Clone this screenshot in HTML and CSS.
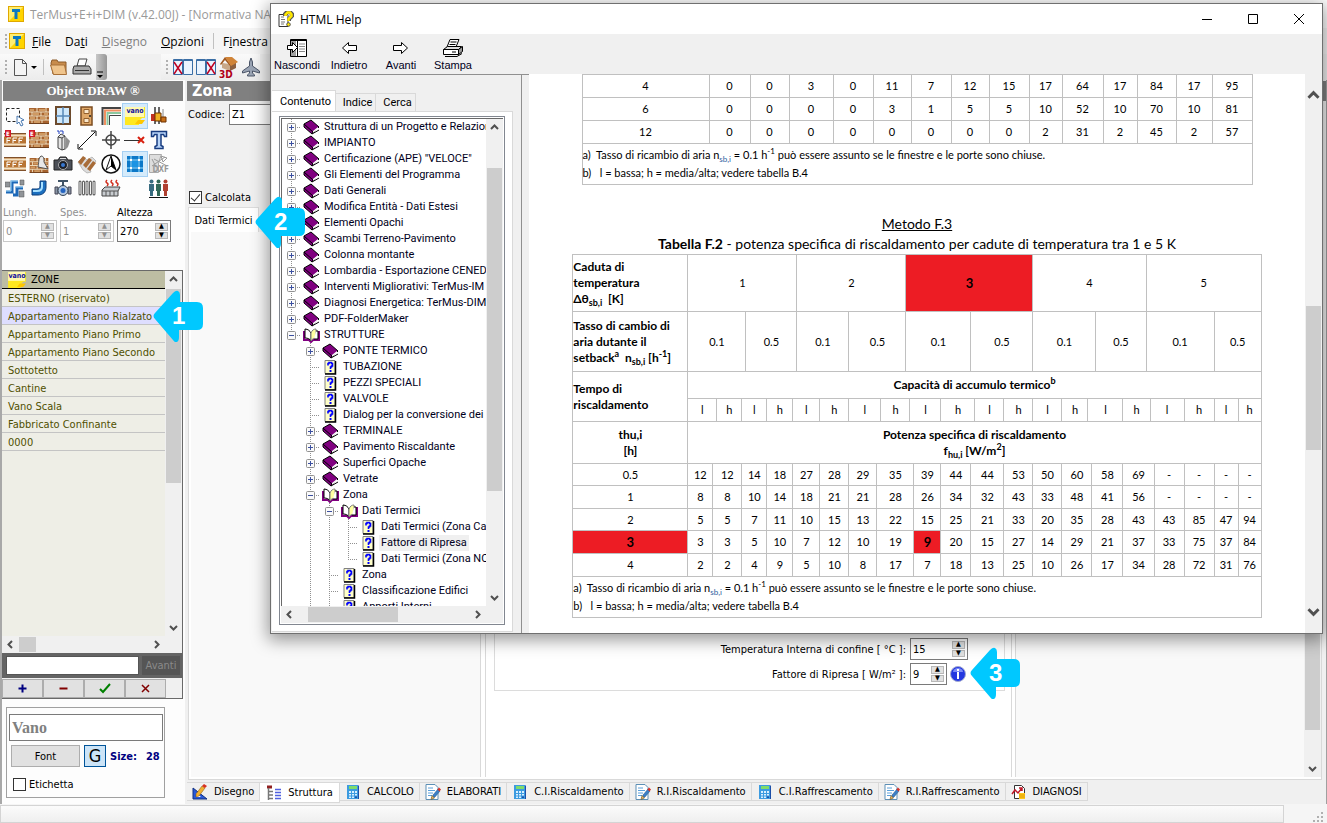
FILE: index.html
```html
<!DOCTYPE html>
<html lang="it">

<head>
  <meta charset="UTF-8">
  <title>TerMus+E+i+DIM</title>
  <link rel="stylesheet" href="styles.css">
</head>

<body>
  <!-- shared icons -->
  <svg class="defs" width="0" height="0">
    <symbol id="logo" viewBox="0 0 16 16">
      <rect x="0.5" y="0.5" width="15" height="15" fill="#ffd400" stroke="#e0a800"/>
      <path d="M1 1h14L1 15z" fill="#ffee70"/>
      <path d="M4 3h8v3h-2.500v7h-3V6H4z" fill="#0a78c2"/>
    </symbol>
    <symbol id="book" viewBox="0 0 17 16">
      <path d="M1 5L8 1l8 7-6 6z" fill="#800080" stroke="#000" stroke-width="1"/>
      <path d="M1 5v3l8 7 1-2z" fill="#800080" stroke="#000" stroke-width="1"/>
      <path d="M10 12l5-4v2l-5 4z" fill="#fff"/>
      <path d="M9 15l7-4" stroke="#000"/>
    </symbol>
    <symbol id="open" viewBox="0 0 17 16">
      <path d="M1 4v9h5l2 2 2-2h6V4" fill="none" stroke="#800080" stroke-width="2"/>
      <path d="M2 2c3 0 5 2 6 4v8c-1-2-3-3-6-3z" fill="#fff" stroke="#000"/>
      <path d="M8 6c1-3 3-4 5-4v9c-2 0-4 1-5 3z" fill="#ffffa0" stroke="#808080"/>
      <path d="M13 4h2v8h-4" fill="#fff" stroke="#000"/>
    </symbol>
    <symbol id="topic" viewBox="0 0 17 16">
      <path d="M3 1.500h10v13H3z" fill="#ffffc8" stroke="#808080"/>
      <path d="M13.500 2v13H3" fill="none" stroke="#000" stroke-width="1.500"/>
      <path d="M6 6.500V4.500h1v-1h2.500v1h1V7h-1v1H8.500v2" fill="none" stroke="#00f" stroke-width="1.600"/>
      <path d="M7.500 11h2v2h-2z" fill="#00f"/>
    </symbol>
    <symbol id="plus" viewBox="0 0 9 9">
      <rect x="0.5" y="0.5" width="8" height="8" rx="1" fill="#fafafa" stroke="#919191"/>
      <path d="M2 4.500h5M4.500 2v5" stroke="#3c50a0"/>
    </symbol>
    <symbol id="minus" viewBox="0 0 9 9">
      <rect x="0.5" y="0.5" width="8" height="8" rx="1" fill="#fafafa" stroke="#919191"/>
      <path d="M2 4.500h5" stroke="#3c50a0"/>
    </symbol>
    <symbol id="calc" viewBox="0 0 16 16">
      <path d="M2 1h11v14H2z" fill="#3c9be0"/>
      <path d="M13 1l1 1v13h-1z" fill="#1c4fa8"/>
      <path d="M4 2h8v3H4z" fill="#7fdc6a"/>
      <path d="M4 7h2v2H4zM7 7h2v2H7zM10 7h2v2h-2zM4 10h2v1.500H4zM7 10h2v1.500H7zM10 10h2v1.500h-2zM4 12.500h2V14H4zM7 12.500h2V14H7z" fill="#d8efff"/>
      <path d="M10 12.500h2V14h-2z" fill="#1c4fa8"/>
    </symbol>
    <symbol id="edit" viewBox="0 0 16 16">
      <path d="M1 0.500h9l3 3v12H1z" fill="#fff" stroke="#5c8fb5"/>
      <path d="M3 4h5M3 6.500h7M3 9h5M3 11.500h4" stroke="#5aa0dc"/>
      <path d="M7 14l1-3 5-6 2 2-5 6z" fill="#3a7fc8" stroke="#24507c" stroke-width="0.500"/>
      <path d="M12.500 5.500l1.500-2 2 2-1.500 2z" fill="#d83028"/>
      <path d="M6 15.500l1-4 2.500 2.500z" fill="#e8b860" stroke="#5c4010" stroke-width="0.500"/>
    </symbol>
    <symbol id="up" viewBox="0 0 9 9"><path d="M1 6l3.500-3.500L8 6" fill="none" stroke="#505050" stroke-width="2"/></symbol>
    <symbol id="down" viewBox="0 0 9 9"><path d="M1 3l3.500 3.500L8 3" fill="none" stroke="#505050" stroke-width="2"/></symbol>
    <symbol id="left" viewBox="0 0 9 9"><path d="M6 1L2.500 4.500 6 8" fill="none" stroke="#505050" stroke-width="2"/></symbol>
    <symbol id="right" viewBox="0 0 9 9"><path d="M3 1l3.500 3.500L3 8" fill="none" stroke="#505050" stroke-width="2"/></symbol>
    <symbol id="arrow" viewBox="0 0 50 52">
      <path d="M2 23L20 3q3-3 5-2 2 1 2 4v7h17q6 0 6 6v16q0 6-6 6H26v7q0 4-2 5-2 1-4-2L2 29q-3-3 0-6z" fill="#00c8ff"/>
    </symbol>
    <symbol id="vano" viewBox="0 0 20 18">
      <path d="M0 0h20v11h-3l-3 3v4H0z" fill="#ffe820"/>
      <path d="M0 0h19v10H0z" fill="#fff9b0"/>
      <path d="M10 17l3-4h7l-3 4z" fill="#ffc800"/>
    </symbol>
    <symbol id="bricks" viewBox="0 0 20 16">
      <path d="M0 0h20v16H0z" fill="#a86430"/>
      <path d="M1 1h4v2H1zM10 1h6v2h-6zM4 5h6v2H4zM15 5h4v2h-4zM1 9h5v2H1zM11 9h5v2h-5zM5 13h6v2H5z" fill="#cf9a62"/>
      <path d="M0 4h20M0 8h20M0 12h20M8 0v4M17 0v4M3 4v4M12 4v4M8 8v4M17 8v4M3 12v4M13 12v4" stroke="#f0e0c0"/>
      <path d="M0 15.500h20" stroke="#70401c"/>
    </symbol>
    <symbol id="blocks" viewBox="0 0 22 14">
      <path d="M0 0h22v14H0z" fill="#b87434"/>
      <path d="M0 2.500h22M0 11.500h22" stroke="#f3e2c4" stroke-width="2"/>
      <path d="M3 10V5h4M3 7.500h3M9 10V5h4M9 7.500h3M15 10V5h4M15 7.500h3" fill="none" stroke="#fff" stroke-width="1"/>
      <path d="M0 0.500h22M0 13.500h22" stroke="#80502a"/>
    </symbol>
  </svg>

  <header class="titlebar">
    <svg width="16" height="16"><use href="#logo"/></svg>
    <span>TerMus+E+i+DIM (v.42.00J) - [Normativa NAZ</span>
  </header>

  <nav class="menubar">
    <i class="grip"></i>
    <svg width="16" height="16"><use href="#logo"/></svg>
    <a href="#file"><u>F</u>ile</a>
    <a href="#dati">Da<u>t</u>i</a>
    <a href="#disegno" class="off"><u>D</u>isegno</a>
    <a href="#opzioni"><u>O</u>pzioni</a>
    <i class="sep"></i>
    <a href="#finestra">F<u>i</u>nestra</a>
  </nav>

  <div class="toolbar">
    <div class="tools">
      <i class="grip"></i>
      <button class="tool" aria-label="Nuovo">
        <svg width="26" height="20" viewBox="0 0 26 20">
          <path d="M2.500 2.500h8l4 4v12h-12z" fill="#f4f4f4" stroke="#555"/><path d="M10.500 2.500v4h4" fill="none" stroke="#555"/>
          <path d="M19 9h6l-3 3z" fill="#000"/>
        </svg>
      </button>
      <i class="sep"></i>
      <button class="tool" aria-label="Apri">
        <svg width="20" height="20" viewBox="0 0 20 20">
          <path d="M2 6l1-3h5l1 2h8v12H4z" fill="#c88c4c" stroke="#8c5a28"/><path d="M1.500 8h14l2 9.500h-13z" fill="#efc48c" stroke="#a87038"/>
        </svg>
      </button>
      <button class="tool" aria-label="Stampa">
        <svg width="20" height="20" viewBox="0 0 20 20">
          <path d="M5 9l2-7h8l-2 7z" fill="#fff" stroke="#444"/><path d="M2 9h15l2 3v5H1v-5z" fill="#a8a8a8" stroke="#333"/><path d="M3 13.500h14" stroke="#333"/>
        </svg>
      </button>
      <button class="more" aria-label="Altro">
        <svg width="8" height="10" viewBox="0 0 8 10"><path d="M1 2h6" stroke="#000"/><path d="M1 5h6L4 8z"/></svg>
      </button>
    </div>
    <div class="tools second">
      <i class="grip"></i>
      <button class="tool" aria-label="Chiudi sinistra">
        <svg width="20" height="18" viewBox="0 0 20 18">
          <path d="M0.500 1.500h9v15h-9zM10.500 1.500h9v15h-9z" fill="#eaf4ff" stroke="#3a6ea5"/><path d="M1 2h8M11 2h8" stroke="#3a6ea5" stroke-width="2"/><path d="M1 4l8 12M9 4L1 16" stroke="#c00020" stroke-width="1.500"/>
        </svg>
      </button>
      <button class="tool" aria-label="Chiudi destra">
        <svg width="20" height="18" viewBox="0 0 20 18">
          <path d="M0.500 1.500h9v15h-9zM10.500 1.500h9v15h-9z" fill="#eaf4ff" stroke="#3a6ea5"/><path d="M1 2h8M11 2h8" stroke="#3a6ea5" stroke-width="2"/><path d="M11 4l8 12M19 4l-8 12" stroke="#c00020" stroke-width="1.500"/>
        </svg>
      </button>
      <button class="tool home" aria-label="Vista 3D">
        <svg width="20" height="22" viewBox="0 0 20 22">
          <path d="M3 7v5l8 3V8z" fill="#c8a888"/><path d="M11 9v6l6-3V6z" fill="#8c6040"/><path d="M1 8l5-7 6 8-1 1-5-6-4 5z" fill="#a05820"/><path d="M6 1h7l6 5-7 4z" fill="#d08438"/>
        </svg>
        <b>3D</b>
      </button>
      <button class="tool" aria-label="Volo">
        <svg width="18" height="20" viewBox="0 0 18 20">
          <path d="M9 1l1.500 4v4l7 5v2l-7-2v2l2 2v1H5.500v-1l2-2v-2l-7 2v-2l7-5V5z" fill="#9aa4b4" stroke="#4c5668"/>
        </svg>
      </button>
    </div>
  </div>

  <main class="work">
    <aside class="side">
      <h2 class="draw-title">Object DRAW ®</h2>
      <div class="palette">
        <button aria-label="Selezione"><svg width="22" height="22" viewBox="0 0 22 22"><path d="M2.500 3.500h13v13h-13z" fill="none" stroke="#222" stroke-dasharray="3 2"/><path d="M13 11l7 4-3 1 2 4-2 1-2-4-2 2z" fill="#fff" stroke="#4878b0"/></svg></button>
        <button aria-label="Parete"><svg width="20" height="16"><use href="#bricks"/></svg></button>
        <button aria-label="Finestra"><svg width="16" height="20" viewBox="0 0 16 20"><path d="M1 1h14v17H1z" fill="#cfe8fb" stroke="#6c4a2c" stroke-width="2"/><path d="M8 1v17M1 10h14" stroke="#5888b8" stroke-width="1.500"/></svg></button>
        <button aria-label="Porta"><svg width="14" height="20" viewBox="0 0 14 20"><path d="M1 1h11v18H1z" fill="#e0a868" stroke="#7c4c20" stroke-width="1.500"/><path d="M4 3.500h5v4H4zM4 12.500h5v4H4z" fill="#fbe8cc" stroke="#94602c"/><path d="M9 10h2" stroke="#222" stroke-width="1.500"/></svg></button>
        <button aria-label="Cornice"><svg width="20" height="20" viewBox="0 0 20 20"><path d="M1.500 19V2H20" fill="none" stroke="#444" stroke-width="2"/><path d="M4 19V4.500H20" fill="none" stroke="#f09060" stroke-width="2"/><path d="M6.500 19V7H20" fill="none" stroke="#8cc8a0" stroke-width="2"/><path d="M8.500 19V9.500H20" fill="none" stroke="#444"/></svg></button>
        <button class="on" aria-label="Vano"><span class="vano"><svg width="20" height="18"><use href="#vano"/></svg><b>vano</b></span></button>
        <button aria-label="Pilastri"><svg width="18" height="20" viewBox="0 0 18 20"><path d="M5 1v17M9 1v17" stroke="#666" stroke-width="2"/><path d="M13 3v12" stroke="#888"/><path d="M1 8h5v7H1z" fill="#c03020"/><path d="M5 7h6v8H5z" fill="#f0b020" stroke="#6c3000"/><path d="M11 11h5v5h-5z" fill="#c87018" stroke="#6c3000"/></svg></button>

        <button class="ext" aria-label="Blocchi esterni"><svg width="22" height="14"><use href="#blocks"/></svg><b>E</b></button>
        <button class="ext" aria-label="Parete esterna"><svg width="20" height="16"><use href="#bricks"/></svg><b>E</b></button>
        <button aria-label="Solido"><svg width="16" height="22" viewBox="0 0 16 22"><path d="M3 8l3-3 4 2v13l-3 1-4-2z" fill="#e4e4e4" stroke="#444"/><path d="M7 9v12M3 8l4 1 3-2" fill="none" stroke="#444"/><path d="M11 8l4 4-2 6-3 3z" fill="#909090"/><path d="M2 2h2v3M5 2h3v3" fill="none" stroke="#2040c0"/></svg></button>
        <button aria-label="Misura"><svg width="20" height="20" viewBox="0 0 20 20"><path d="M2 18L18 2M1 14v5h5M14 1h5v5" fill="none" stroke="#111"/></svg></button>
        <button aria-label="Mirino"><svg width="18" height="18" viewBox="0 0 18 18"><circle cx="9" cy="9" r="5" fill="none" stroke="#444" stroke-width="1.500"/><path d="M0 9h18M9 0v18" stroke="#444" stroke-width="1.500"/></svg></button>
        <button aria-label="Elimina linea"><svg width="22" height="14" viewBox="0 0 22 14"><path d="M0 7.500h16" stroke="#333"/><path d="M14 4l6 6M20 4l-6 6" stroke="#d82010" stroke-width="2"/></svg></button>
        <button aria-label="Testo"><svg width="18" height="20" viewBox="0 0 18 20"><path d="M1.500 1.500h15v5h-2l-1-2h-2.500v11l2 1v2h-8v-2l2-1v-11H4.500l-1 2h-2z" fill="#b8d4f8" stroke="#183c80" stroke-width="1.500"/></svg></button>

        <button aria-label="Blocchi"><svg width="22" height="14"><use href="#blocks"/></svg></button>
        <button aria-label="Muratura"><svg width="20" height="18" viewBox="0 0 20 18"><use href="#bricks" y="3" width="20" height="15"/><path d="M9 12c1-3 0-9 3-11 3 0 3 3 3 6l4 7-5-1z" fill="#e8e8e8" stroke="#555"/></svg></button>
        <button aria-label="Foto"><svg width="20" height="16" viewBox="0 0 20 16"><path d="M1 4h4l2-3h6l2 3h4v10H1z" fill="#4c5058" stroke="#222"/><circle cx="10" cy="9" r="4.500" fill="#1c2028" stroke="#aaa"/><circle cx="10" cy="9" r="2" fill="#3878d0"/><path d="M7 2.500h6" stroke="#ddd"/></svg></button>
        <button aria-label="Scala"><svg width="20" height="20" viewBox="0 0 20 20"><path d="M1 8l5-5 4 3 5-3 4 4-6 8 1 3-4 1-4-3z" fill="#ddd" stroke="#888" stroke-width="0.500"/><path d="M1 8l5-6 3 2-5 7zM6 11l6-7 3 2-6 8zM10 15l6-8 3 2-6 8z" fill="#a86c38"/></svg></button>
        <button aria-label="Nord"><svg width="20" height="20" viewBox="0 0 20 20"><circle cx="10" cy="10" r="9" fill="#fff" stroke="#111" stroke-width="1.500"/><path d="M10 2l5 14-5-4-5 4z" fill="#fff" stroke="#111"/><path d="M10 2v10l5 4z"/></svg></button>
        <button class="on" aria-label="Griglia"><svg width="16" height="16" viewBox="0 0 16 16"><path d="M0 0h16v16H0z" fill="#0c78c8"/><path d="M4 0v16M12 0v16M0 4h16M0 12h16" stroke="#9ce0ff"/><path d="M5 5h6v6H5z" fill="#1c94e4"/><path d="M3 3h2v2H3zM11 3h2v2h-2zM3 11h2v2H3zM11 11h2v2h-2z" fill="#fff"/></svg></button>
        <button class="dxf" aria-label="Sfondo DXF"><svg width="20" height="20" viewBox="0 0 20 20"><path d="M0.500 0.500h12l-3 8v10h-9z" fill="#ddd" stroke="#aaa"/><path d="M3 12L16 3M5 5l13 7M3 5l4 8M12 2l6 2-4 4z" fill="none" stroke="#999"/></svg><b>DXF</b></button>

        <button aria-label="Tubazioni"><svg width="20" height="20" viewBox="0 0 20 20"><path d="M0 4h5v5H0zM15 2h4v5h-4zM14 13h5v6h-5z" fill="#909498" stroke="#555" stroke-width="0.500"/><path d="M1 14h6V4h6M18 10h-6v7H8" fill="none" stroke="#1c68b8" stroke-width="3"/><path d="M1 13h5V3h7M18 9h-7" fill="none" stroke="#a0d8f8"/></svg></button>
        <button aria-label="Raccordo"><svg width="16" height="16" viewBox="0 0 16 16"><path d="M9 1h6v6c0 5-3 8-8 8H1V9h5c2 0 3-1 3-3z" fill="#1c70c0" stroke="#0c3c78"/><path d="M11 2v5c0 3-2 4-5 4H2" fill="none" stroke="#a8e0ff" stroke-width="2"/></svg></button>
        <button aria-label="Valvola"><svg width="18" height="18" viewBox="0 0 18 18"><path d="M4 2h10M9 2v5" stroke="#405468" stroke-width="2"/><path d="M1 8h3v7H1zM14 8h3v7h-3z" fill="#8894a4" stroke="#445"/><circle cx="9" cy="11.500" r="5" fill="#b4c8e0" stroke="#345"/><circle cx="9" cy="11.500" r="2.500" fill="#2464c0"/></svg></button>
        <button aria-label="Radiatore"><svg width="18" height="16" viewBox="0 0 18 16"><path d="M2 2v12M5.500 2v12M9 2v12M12.500 2v12M16 2v12" stroke="#666" stroke-width="3" stroke-linecap="round"/><path d="M2 2v12M5.500 2v12M9 2v12M12.500 2v12M16 2v12" stroke="#f4f4f4"/></svg></button>
        <button aria-label="Riscaldamento"><svg width="20" height="18" viewBox="0 0 20 18"><path d="M6 1q-2 2 0 3t0 3M11 1q-2 2 0 3t0 3M16 1q-2 2 0 3t0 3" fill="none" stroke="#d03020" stroke-width="1.500"/><path d="M1 11l3-3h15l-2 4v5H1z" fill="#c8ccd0" stroke="#444"/><path d="M1 12h16M5 12v5M9 12v5M13 12v5" stroke="#555"/></svg></button>
        <span></span>
        <button aria-label="Occupanti"><svg width="22" height="20" viewBox="0 0 22 20"><path d="M1 6h5v7H5v5H2v-5H1z" fill="#386c80"/><circle cx="3.500" cy="3.500" r="2" fill="#386c80"/><path d="M8 6h5v7h-1v5H9v-5H8z" fill="#306858"/><circle cx="10.500" cy="3.500" r="2" fill="#306858"/><path d="M15 6h5v7h-1v5h-3v-5h-1z" fill="#b04030"/><circle cx="17.500" cy="3.500" r="2" fill="#b04030"/><path d="M1 19.500h19" stroke="#111"/></svg></button>
      </div>

      <div class="dims">
        <div class="dim off">
          <label for="lungh">Lungh.</label>
          <div class="spin"><input id="lungh" type="text" value="0" disabled><span><button disabled aria-label="Su">▲</button><button disabled aria-label="Giù">▼</button></span></div>
        </div>
        <div class="dim off">
          <label for="spes">Spes.</label>
          <div class="spin"><input id="spes" type="text" value="1" disabled><span><button disabled aria-label="Su">▲</button><button disabled aria-label="Giù">▼</button></span></div>
        </div>
        <div class="dim">
          <label for="altezza">Altezza</label>
          <div class="spin"><input id="altezza" type="text" value="270"><span><button aria-label="Su">▲</button><button aria-label="Giù">▼</button></span></div>
        </div>
      </div>

      <div class="zones">
        <div class="zones-body">
          <div class="zones-list">
            <h3><span class="vano small"><svg width="18" height="16"><use href="#vano"/></svg><b>vano</b></span>ZONE</h3>
            <ul>
              <li>ESTERNO (riservato)</li>
              <li class="sel">Appartamento Piano Rialzato</li>
              <li>Appartamento Piano Primo</li>
              <li>Appartamento Piano Secondo</li>
              <li>Sottotetto</li>
              <li>Cantine</li>
              <li>Vano Scala</li>
              <li>Fabbricato Confinante</li>
              <li>0000</li>
            </ul>
          </div>
          <div class="vbar"><svg width="9" height="9"><use href="#up"/></svg><i class="thumb zones-thumb"></i><svg class="end" width="9" height="9"><use href="#down"/></svg></div>
        </div>
        <div class="hbar"><svg width="9" height="9"><use href="#left"/></svg><i class="thumb"></i><svg class="end" width="9" height="9"><use href="#right"/></svg></div>
        <div class="search"><input type="text" aria-label="Cerca zona"><button>Avanti</button></div>
        <div class="actions">
          <button aria-label="Aggiungi"><svg width="11" height="11" viewBox="0 0 11 11"><path d="M1.500 5.500h8M5.500 1.500v8" stroke="#000080" stroke-width="2"/></svg></button>
          <button aria-label="Rimuovi"><svg width="11" height="11" viewBox="0 0 11 11"><path d="M1.500 5.500h8" stroke="#800000" stroke-width="2"/></svg></button>
          <button aria-label="Conferma"><svg width="12" height="11" viewBox="0 0 12 11"><path d="M1 6l3 3 7-8" fill="none" stroke="#008000" stroke-width="2"/></svg></button>
          <button aria-label="Annulla"><svg width="11" height="11" viewBox="0 0 11 11"><path d="M2 2l7 7M9 2L2 9" stroke="#800000" stroke-width="1.500"/></svg></button>
        </div>
      </div>

      <div class="fontbox">
        <input class="sample" type="text" value="Vano" aria-label="Testo">
        <div class="fontrow">
          <button class="font">Font</button>
          <button class="bold">G</button>
          <b>Size:</b><b>28</b>
        </div>
        <label class="check"><input type="checkbox">Etichetta</label>
      </div>
    </aside>

    <section class="editor">
      <h1>Zona</h1>
      <div class="head">
        <div class="code"><label for="codice">Codice:</label><input id="codice" type="text" value="Z1"></div>
        <label class="check"><input type="checkbox" checked>Calcolata</label>
      </div>
      <div class="subtabs"><button>Dati Termici</button></div>
      <div class="panes">
        <div class="pane left"></div>
        <div class="pane mid">
          <div class="group">
            <div class="field"><label for="confine">Temperatura Interna di confine [ °C ]:</label><div class="spin wide"><input id="confine" type="text" value="15"><span><button aria-label="Su">▲</button><button aria-label="Giù">▼</button></span></div></div>
            <div class="field"><label for="ripresa">Fattore di Ripresa [ W/m² ]:</label><div class="spin"><input id="ripresa" type="text" value="9"><span><button aria-label="Su">▲</button><button aria-label="Giù">▼</button></span></div>
              <button class="info" aria-label="Informazioni"><svg width="16" height="16" viewBox="0 0 16 16"><circle cx="8" cy="8" r="7.500" fill="#2438e0" stroke="#a0a8d0"/><path d="M3 6a5 4 0 0 1 10 0z" fill="#7c8cf8"/><path d="M7 3h2v2H7zM7 6h2v7H7z" fill="#fff"/></svg></button>
            </div>
          </div>
        </div>
        <div class="pane rest"></div>
        <div class="vbar"><i class="thumb editor-thumb"></i><svg class="end" width="9" height="9"><use href="#down"/></svg></div>
      </div>
      <nav class="sheets">
        <a href="#s1"><svg width="16" height="16" viewBox="0 0 16 16"><path d="M1 15V4l14 11z" fill="#2858d8" stroke="#103080"/><path d="M4 13V9l5 4z" fill="#fff"/><path d="M4 10l6-8 3 2-6 8-3 1z" fill="#f0b030" stroke="#805010" stroke-width="0.500"/><path d="M10 2l2-2 3 2-2 2z" fill="#d83020"/></svg>Disegno</a>
        <a href="#s2" class="cur"><svg width="16" height="16" viewBox="0 0 16 16"><path d="M1 2h5" stroke="#902020" stroke-width="3"/><path d="M2.500 3v12M2 6.500h5M2 10h5M2 13.500h5" fill="none" stroke="#777" stroke-width="1.500"/><path d="M9 4.500h6M9 7.500h6M9 10.500h6M9 13.500h6" stroke="#5060e0" stroke-width="1.500"/></svg>Struttura</a>
        <a href="#s3"><svg width="16" height="16"><use href="#calc"/></svg>CALCOLO</a>
        <a href="#s4"><svg width="16" height="16"><use href="#edit"/></svg>ELABORATI</a>
        <a href="#s5"><svg width="16" height="16"><use href="#calc"/></svg>C.I.Riscaldamento</a>
        <a href="#s6"><svg width="16" height="16"><use href="#edit"/></svg>R.I.Riscaldamento</a>
        <a href="#s7"><svg width="16" height="16"><use href="#calc"/></svg>C.I.Raffrescamento</a>
        <a href="#s8"><svg width="16" height="16"><use href="#edit"/></svg>R.I.Raffrescamento</a>
        <a href="#s9"><svg width="16" height="16" viewBox="0 0 16 16"><path d="M3.500 1.500h7l3 3v10h-10z" fill="#fff" stroke="#333"/><path d="M1 10l3-4 3 3 4-5M8 4h3v3" fill="none" stroke="#c01828" stroke-width="1.500"/><path d="M8 9h6v6H8z" fill="#ffc820"/><path d="M8 11h6M8 13h6" stroke="#e0a000"/></svg>DIAGNOSI</a>
      </nav>
    </section>
  </main>

  <footer class="status"><div></div><svg width="12" height="12" viewBox="0 0 12 12"><path d="M9 1h2v2H9zM5 5h2v2H5zM9 5h2v2H9zM1 9h2v2H1zM5 9h2v2H5zM9 9h2v2H9z" fill="#b0b0b0"/></svg></footer>

  <div class="help" role="dialog" aria-label="HTML Help">
    <div class="help-title">
      <svg width="16" height="16" viewBox="0 0 16 16"><path d="M1 3.500h9v12H1z" fill="#fff" stroke="#333"/><path d="M3 6h3M3 8.500h4M3 11h4M3 13h3" stroke="#777"/><path d="M7 5V3l2-2h3l2 2v2l-3 3v2" fill="none" stroke="#555" stroke-width="4"/><path d="M7.500 5V3.500l2-2h2.500l1.500 2V5l-3 3v2" fill="none" stroke="#ffe800" stroke-width="2.500"/><circle cx="10.500" cy="13.500" r="1.800" fill="#ffe800" stroke="#555"/></svg>
      <span>HTML Help</span>
      <div class="winbtns">
        <button aria-label="Riduci"><svg width="12" height="12" viewBox="0 0 12 12"><path d="M1 6.500h10" stroke="#000"/></svg></button>
        <button aria-label="Ingrandisci"><svg width="12" height="12" viewBox="0 0 12 12"><path d="M1.500 1.500h9v9h-9z" fill="none" stroke="#000"/></svg></button>
        <button aria-label="Chiudi"><svg width="12" height="12" viewBox="0 0 12 12"><path d="M1 1l10 10M11 1L1 11" stroke="#000"/></svg></button>
      </div>
    </div>
    <div class="help-tools">
      <button><svg width="20" height="20" viewBox="0 0 20 20"><path d="M3.500 1.500h16v17h-16z" fill="#fff" stroke="#000"/><path d="M4 2h5v16H4z" fill="#a0a0a0"/><path d="M3 2.500h17M10.500 3v15" stroke="#000"/><path d="M12 6h6M12 8.500h6M12 11h6M12 13.500h6" stroke="#888"/><path d="M0.500 7.500h5v-3l5 5-5 5v-3h-5z" fill="#fff" stroke="#000"/></svg>Nascondi</button>
      <button><svg width="20" height="20" viewBox="0 0 20 20"><path d="M17.500 7.500h-8v-3l-6 5.500 6 5.500v-3h8z" fill="#fff" stroke="#000"/></svg>Indietro</button>
      <button><svg width="20" height="20" viewBox="0 0 20 20"><path d="M2.500 7.500h8v-3l6 5.500-6 5.500v-3h-8z" fill="#fff" stroke="#000"/></svg>Avanti</button>
      <button><svg width="22" height="20" viewBox="0 0 22 20"><path d="M5 9l3-7.500h9L14 9" fill="#fff" stroke="#000"/><path d="M8.500 4h6M7.500 6.500h6" stroke="#000"/><path d="M1.500 11.500l4-3h14l-3 3z" fill="#ddd" stroke="#000"/><path d="M1.500 11.500h15v5h-15z" fill="#fff" stroke="#000"/><path d="M16.500 11.500l4-3v5l-4 3z" fill="#999" stroke="#000"/><path d="M3 18.500h12l5-3M10 14h4" fill="none" stroke="#000"/></svg>Stampa</button>
    </div>
    <div class="help-main">
      <div class="nav">
        <div class="tabs"><button class="cur">Contenuto</button><button>Indice</button><button>Cerca</button></div>
        <div class="tabpage">
          <div class="tree">
            <div class="tree-rows">
              <ul>
                <li><i class="b"><svg><use href="#plus"/></svg></i><svg><use href="#book"/></svg><span>Struttura di un Progetto e Relazion</span></li>
                <li><i class="b"><svg><use href="#plus"/></svg></i><svg><use href="#book"/></svg><span>IMPIANTO</span></li>
                <li><i class="b"><svg><use href="#plus"/></svg></i><svg><use href="#book"/></svg><span>Certificazione (APE) "VELOCE"</span></li>
                <li><i class="b"><svg><use href="#plus"/></svg></i><svg><use href="#book"/></svg><span>Gli Elementi del Programma</span></li>
                <li><i class="b"><svg><use href="#plus"/></svg></i><svg><use href="#book"/></svg><span>Dati Generali</span></li>
                <li><i class="b"><svg><use href="#plus"/></svg></i><svg><use href="#book"/></svg><span>Modifica Entità - Dati Estesi</span></li>
                <li><i class="b"><svg><use href="#plus"/></svg></i><svg><use href="#book"/></svg><span>Elementi Opachi</span></li>
                <li><i class="b"><svg><use href="#plus"/></svg></i><svg><use href="#book"/></svg><span>Scambi Terreno-Pavimento</span></li>
                <li><i class="b"><svg><use href="#plus"/></svg></i><svg><use href="#book"/></svg><span>Colonna montante</span></li>
                <li><i class="b"><svg><use href="#plus"/></svg></i><svg><use href="#book"/></svg><span>Lombardia - Esportazione CENED-</span></li>
                <li><i class="b"><svg><use href="#plus"/></svg></i><svg><use href="#book"/></svg><span>Interventi Migliorativi: TerMus-IM</span></li>
                <li><i class="b"><svg><use href="#plus"/></svg></i><svg><use href="#book"/></svg><span>Diagnosi Energetica: TerMus-DIM</span></li>
                <li><i class="b"><svg><use href="#plus"/></svg></i><svg><use href="#book"/></svg><span>PDF-FolderMaker</span></li>
                <li><i class="b last"><svg><use href="#minus"/></svg></i><svg><use href="#open"/></svg><span>STRUTTURE</span></li>
                <li><i></i><i class="b"><svg><use href="#plus"/></svg></i><svg><use href="#book"/></svg><span>PONTE TERMICO</span></li>
                <li><i></i><i class="b"></i><svg><use href="#topic"/></svg><span>TUBAZIONE</span></li>
                <li><i></i><i class="b"></i><svg><use href="#topic"/></svg><span>PEZZI SPECIALI</span></li>
                <li><i></i><i class="b"></i><svg><use href="#topic"/></svg><span>VALVOLE</span></li>
                <li><i></i><i class="b"></i><svg><use href="#topic"/></svg><span>Dialog per la conversione dei c</span></li>
                <li><i></i><i class="b"><svg><use href="#plus"/></svg></i><svg><use href="#book"/></svg><span>TERMINALE</span></li>
                <li><i></i><i class="b"><svg><use href="#plus"/></svg></i><svg><use href="#book"/></svg><span>Pavimento Riscaldante</span></li>
                <li><i></i><i class="b"><svg><use href="#plus"/></svg></i><svg><use href="#book"/></svg><span>Superfici Opache</span></li>
                <li><i></i><i class="b"><svg><use href="#plus"/></svg></i><svg><use href="#book"/></svg><span>Vetrate</span></li>
                <li><i></i><i class="b"><svg><use href="#minus"/></svg></i><svg><use href="#open"/></svg><span>Zona</span></li>
                <li><i></i><i class="v"></i><i class="b"><svg><use href="#minus"/></svg></i><svg><use href="#open"/></svg><span>Dati Termici</span></li>
                <li><i></i><i class="v"></i><i class="v"></i><i class="b"></i><svg><use href="#topic"/></svg><span>Dati Termici (Zona Cal</span></li>
                <li><i></i><i class="v"></i><i class="v"></i><i class="b"></i><svg><use href="#topic"/></svg><span class="sel">Fattore di Ripresa</span></li>
                <li><i></i><i class="v"></i><i class="v"></i><i class="b last"></i><svg><use href="#topic"/></svg><span>Dati Termici (Zona NO</span></li>
                <li><i></i><i class="v"></i><i class="b"></i><svg><use href="#topic"/></svg><span>Zona</span></li>
                <li><i></i><i class="v"></i><i class="b"></i><svg><use href="#topic"/></svg><span>Classificazione Edifici</span></li>
                <li><i></i><i class="v"></i><i class="b"></i><svg><use href="#topic"/></svg><span>Apporti Interni</span></li>
              </ul>
              <div class="vbar"><svg width="9" height="9"><use href="#up"/></svg><i class="thumb tree-thumb"></i><svg class="end" width="9" height="9"><use href="#down"/></svg></div>
            </div>
            <div class="hbar"><svg width="9" height="9"><use href="#left"/></svg><i class="thumb"></i><svg class="end" width="9" height="9"><use href="#right"/></svg></div>
          </div>
        </div>
      </div>
      <div class="doc">
        <div class="page">
          <table class="t1">
            <colgroup><col class="w127"><col class="w41"><col class="w39"><col class="w44"><col class="w40"><col class="w38"><col class="w40"><col class="w38"><col class="w40"><col class="w33"><col class="w41"><col class="w34"><col class="w39"><col class="w36"><col class="w40"></colgroup>
            <tr><td>4</td><td>0</td><td>0</td><td>3</td><td>0</td><td>11</td><td>7</td><td>12</td><td>15</td><td>17</td><td>64</td><td>17</td><td>84</td><td>17</td><td>95</td></tr>
            <tr><td>6</td><td>0</td><td>0</td><td>0</td><td>0</td><td>3</td><td>1</td><td>5</td><td>5</td><td>10</td><td>52</td><td>10</td><td>70</td><td>10</td><td>81</td></tr>
            <tr><td>12</td><td>0</td><td>0</td><td>0</td><td>0</td><td>0</td><td>0</td><td>0</td><td>0</td><td>2</td><td>31</td><td>2</td><td>45</td><td>2</td><td>57</td></tr>
            <tr><td class="note" colspan="15">a)&nbsp; Tasso di ricambio di aria n<sub>sb,i</sub> = 0.1 h<sup>-1</sup> può essere assunto se le finestre e le porte sono chiuse.<br>b)&nbsp;&nbsp; l = bassa; h = media/alta; vedere tabella B.4</td></tr>
          </table>

          <p class="method"><u>Metodo F.3</u></p>
          <p class="caption"><b>Tabella F.2</b> - potenza specifica di riscaldamento per cadute di temperatura tra 1 e 5 K</p>

          <table class="t2">
            <colgroup>
              <col class="w115"><col class="w25"><col class="w4"><col class="w25"><col class="w4"><col class="w21"><col class="w26"><col class="w4">
              <col class="w23"><col class="w29"><col class="w28"><col class="w4"><col class="w25"><col class="w4"><col class="w4"><col class="w27">
              <col class="w30"><col class="w4"><col class="w29"><col class="w29"><col class="w29"><col class="w26"><col class="w4"><col class="w4">
              <col class="w27"><col class="w23"><col class="w4"><col class="w4"><col class="w30"><col class="w30"><col class="w24"><col class="w23">
            </colgroup>
            <tr class="r57"><th>Caduta di temperatura<br>Δθ<sub>sb,i</sub>&nbsp; [K]</th><td colspan="7">1</td><td colspan="5">2</td><td colspan="7" class="red">3</td><td colspan="6">4</td><td colspan="6">5</td></tr>
            <tr class="r60"><th>Tasso di cambio di aria dutante il<br>setback<sup>a</sup>&nbsp; n<sub>sb,i</sub> [h<sup>-1</sup>]</th><td colspan="4">0.1</td><td colspan="3">0.5</td><td colspan="2">0.1</td><td colspan="3">0.5</td><td colspan="4">0.1</td><td colspan="3">0.5</td><td colspan="4">0.1</td><td colspan="2">0.5</td><td colspan="4">0.1</td><td colspan="2">0.5</td></tr>
            <tr class="r27"><th rowspan="2">Tempo di riscaldamento</th><th class="mid" colspan="31">Capacità di accumulo termico<sup>b</sup></th></tr>
            <tr><td colspan="2">l</td><td>h</td><td colspan="2">l</td><td>h</td><td colspan="2">l</td><td>h</td><td colspan="2">l</td><td colspan="2">h</td><td colspan="2">l</td><td colspan="2">h</td><td>l</td><td>h</td><td>l</td><td>h</td><td colspan="3">l</td><td colspan="2">h</td><td colspan="2">l</td><td>h</td><td>l</td><td>h</td></tr>
            <tr class="r42"><th class="mid">thu,i<br>[h]</th><th class="mid" colspan="31">Potenza specifica di riscaldamento<br>f<sub>hu,i</sub> [W/m<sup>2</sup>]</th></tr>
            <tr class="r22"><td>0.5</td><td>12</td><td colspan="2">12</td><td colspan="2">14</td><td>18</td><td colspan="2">27</td><td>28</td><td>29</td><td colspan="4">35</td><td>39</td><td>44</td><td colspan="2">44</td><td>53</td><td>50</td><td colspan="2">60</td><td colspan="2">58</td><td colspan="3">69</td><td>-</td><td>-</td><td>-</td><td>-</td></tr>
            <tr><td>1</td><td>8</td><td colspan="2">8</td><td colspan="2">10</td><td>14</td><td colspan="2">18</td><td>21</td><td>21</td><td colspan="4">28</td><td>26</td><td>34</td><td colspan="2">32</td><td>43</td><td>33</td><td colspan="2">48</td><td colspan="2">41</td><td colspan="3">56</td><td>-</td><td>-</td><td>-</td><td>-</td></tr>
            <tr class="r22"><td>2</td><td>5</td><td colspan="2">5</td><td colspan="2">7</td><td>11</td><td colspan="2">10</td><td>15</td><td>13</td><td colspan="4">22</td><td>15</td><td>25</td><td colspan="2">21</td><td>33</td><td>20</td><td colspan="2">35</td><td colspan="2">28</td><td colspan="3">43</td><td>43</td><td>85</td><td>47</td><td>94</td></tr>
            <tr><td class="red">3</td><td>3</td><td colspan="2">3</td><td colspan="2">5</td><td>10</td><td colspan="2">7</td><td>12</td><td>10</td><td colspan="4">19</td><td class="red">9</td><td>20</td><td colspan="2">15</td><td>27</td><td>14</td><td colspan="2">29</td><td colspan="2">21</td><td colspan="3">37</td><td>33</td><td>75</td><td>37</td><td>84</td></tr>
            <tr><td>4</td><td>2</td><td colspan="2">2</td><td colspan="2">4</td><td>9</td><td colspan="2">5</td><td>10</td><td>8</td><td colspan="4">17</td><td>7</td><td>18</td><td colspan="2">13</td><td>25</td><td>10</td><td colspan="2">26</td><td colspan="2">17</td><td colspan="3">34</td><td>28</td><td>72</td><td>31</td><td>76</td></tr>
            <tr><td class="note" colspan="32">a)&nbsp; Tasso di ricambio di aria n<sub>sb,i</sub> = 0.1 h<sup>-1</sup> può essere assunto se le finestre e le porte sono chiuse.<br>b)&nbsp;&nbsp; l = bassa; h = media/alta; vedere tabella B.4</td></tr>
          </table>
        </div>
        <div class="vbar"><svg width="13" height="13"><use href="#up"/></svg><i class="thumb doc-thumb"></i><svg class="end" width="13" height="13"><use href="#down"/></svg></div>
      </div>
    </div>
  </div>

  <div class="step s1"><svg width="50" height="52"><use href="#arrow"/></svg><b>1</b></div>
  <div class="step s2"><svg width="50" height="52"><use href="#arrow"/></svg><b>2</b></div>
  <div class="step s3"><svg width="50" height="52"><use href="#arrow"/></svg><b>3</b></div>
</body>

</html>
```
FILE: styles.css
```css
* {
  box-sizing: border-box;
}

body {
  margin: 0;
  height: 100vh;
  display: flex;
  flex-direction: column;
  overflow: hidden;
  position: relative;
  background: #f0f0f0;
  font-family: "DejaVu Sans Condensed", "DejaVu Sans", sans-serif;
  font-size: 11px;
  color: #000;
}

button, input {
  font: inherit;
  color: inherit;
  margin: 0;
  padding: 0;
}

button {
  border: 0;
  background: none;
}

a {
  color: inherit;
  text-decoration: none;
}

ul, h1, h2, h3, p {
  margin: 0;
  padding: 0;
  list-style: none;
}

svg {
  display: block;
  flex: none;
}

.defs {
  position: absolute;
}

/* title, menu, toolbar */
.titlebar {
  height: 28px;
  padding-left: 8px;
  display: flex;
  align-items: center;
  gap: 6px;
  background: #fff;
  color: #999;
  font-family: "Open Sans", "Noto Sans", sans-serif;
  font-size: 12px;
  white-space: nowrap;
}

.menubar {
  height: 26px;
  padding-left: 5px;
  display: flex;
  align-items: center;
  background: #f5f5f5;
  font-family: "Open Sans", "Noto Sans", sans-serif;
  font-size: 12px;
}

.menubar a {
  padding: 0 7px;
}

.menubar .off {
  color: #808080;
}

.grip {
  width: 2px;
  height: 14px;
  margin-right: 2px;
  background: repeating-linear-gradient(#b0b0b0 0 2px, transparent 2px 4px);
}

.sep {
  width: 1px;
  height: 16px;
  margin: 0 2px;
  background: #c0c0c0;
}

.toolbar {
  height: 26px;
  display: flex;
  gap: 54px;
  background: #f0f0f0;
}

.tools {
  display: flex;
  align-items: center;
  gap: 3px;
  padding-left: 5px;
  background: linear-gradient(#fafafa, #ececec);
}

.tool {
  display: flex;
}

.tools .grip {
  margin-right: 2px;
}

.more {
  align-self: stretch;
  width: 11px;
  margin-left: 1px;
  display: flex;
  align-items: flex-end;
  background: linear-gradient(90deg, #c8c8c8, #969696);
  border-radius: 0 3px 3px 0;
}

.home {
  position: relative;
}

.home b {
  position: absolute;
  left: 0;
  bottom: -2px;
  color: #b00018;
  font-size: 10px;
  line-height: 10px;
}

/* left panel */
.work {
  flex: 1;
  min-height: 0;
  display: flex;
}

.side {
  width: 185px;
  flex: none;
  display: flex;
  flex-direction: column;
  background: #fdfdfd;
  border-left: 2px solid #a8a8a8;
}

.draw-title {
  margin: 1px 2px 0 1px;
  height: 20px;
  background: #808080;
  color: #fff;
  text-align: center;
  font: bold 13px/20px "Liberation Serif", serif;
}

.palette {
  display: grid;
  grid-template-columns: repeat(7, 24px);
  grid-auto-rows: 24px;
  margin: 3px 0 0 1px;
}

.palette button {
  display: flex;
  align-items: center;
  justify-content: center;
  position: relative;
}

.palette .on {
  background: #d5ebfb;
  outline: 1px solid #a5d0f3;
}

.vano {
  position: relative;
  display: block;
}

.vano b {
  position: absolute;
  left: 0;
  top: 0;
  width: 100%;
  text-align: center;
  color: #10109c;
  font-size: 7px;
  line-height: 9px;
}

.ext b {
  position: absolute;
  left: 2px;
  top: 2px;
  padding: 0 1px;
  background: #d01828;
  color: #fff;
  font-size: 6px;
  line-height: 7px;
}

.dxf b {
  position: absolute;
  right: 2px;
  bottom: 2px;
  color: #999;
  font-size: 8px;
  line-height: 8px;
}

.dims {
  display: flex;
  gap: 3px;
  margin: 5px 0 0 1px;
}

.dim label {
  display: block;
  height: 15px;
  line-height: 15px;
}

.dim .spin {
  width: 54px;
}

.off {
  color: #909090;
}

.spin {
  display: flex;
  width: 37px;
  height: 22px;
  padding: 2px;
  background: #fff;
  border: 1px solid #7a7a7a;
}

.off .spin {
  border-color: #c8c8c8;
}

.spin input {
  flex: 1;
  min-width: 0;
  border: 0;
  background: none;
}

.spin span {
  width: 13px;
  display: flex;
  flex-direction: column;
  gap: 1px;
}

.spin button {
  flex: 1;
  background: #e1e1e1;
  border: 1px solid #b8b8b8;
  font-size: 7px;
  line-height: 5px;
}

.zones {
  flex: 1;
  min-height: 0;
  margin: 28px 2px 0 0;
  display: flex;
  flex-direction: column;
  border: 1px solid #696969;
  border-left: 0;
  background: #f0f0f0;
}

.zones-body {
  flex: 1;
  min-height: 0;
  display: flex;
}

.zones-list {
  flex: 1;
  background: #eeeee6;
  color: #505000;
}

.zones-list h3 {
  display: flex;
  align-items: center;
  gap: 5px;
  height: 18px;
  padding-left: 6px;
  background: #bdbda3;
  border-bottom: 1px solid #000;
  color: #000;
  font: inherit;
}

.zones-list li {
  height: 18px;
  padding-left: 6px;
  line-height: 19px;
  border-bottom: 1px solid #c4c4c4;
  white-space: nowrap;
}

.zones-list .sel {
  background: #dedeff;
}

.vbar {
  width: 17px;
  flex: none;
  display: flex;
  flex-direction: column;
  align-items: center;
  padding: 4px 0;
  background: #f0f0f0;
}

.hbar {
  height: 17px;
  flex: none;
  display: flex;
  align-items: center;
  padding: 0 4px;
  background: #f0f0f0;
}

.thumb {
  background: #cdcdcd;
}

.vbar .thumb {
  width: 15px;
}

.hbar .thumb {
  width: 17px;
  height: 15px;
  margin-left: 4px;
}

.vbar .end {
  margin-top: auto;
}

.hbar .end {
  margin-left: auto;
  margin-right: 17px;
}

.zones-thumb {
  height: 194px;
  margin-top: 5px;
}

.search {
  height: 25px;
  padding: 3px 2px 3px 4px;
  display: flex;
  gap: 3px;
  background: #646464;
}

.search input {
  flex: 1;
  min-width: 0;
  border: 1px solid #555;
  background: #fff;
}

.search button {
  width: 38px;
  background: #555;
  color: #8a8a8a;
}

.actions {
  display: flex;
  height: 20px;
  padding: 1px 16px 0 0;
}

.actions button {
  flex: 1;
  display: flex;
  align-items: center;
  justify-content: center;
  background: #e1e1e1;
  border: 1px solid #adadad;
}

.fontbox {
  margin: 8px 20px 6px 4px;
  padding: 6px 1px 6px 2px;
  border: 1px solid #a0a0a0;
  display: flex;
  flex-direction: column;
  gap: 4px;
}

.sample {
  height: 27px;
  width: 100%;
  padding: 0 2px;
  border: 1px solid #7a7a7a;
  color: #808080;
  font: bold 16px "Liberation Serif", serif;
}

.fontrow {
  display: flex;
  align-items: center;
  gap: 4px;
  padding-left: 2px;
  color: #000080;
}

.fontrow b + b {
  margin-left: 5px;
}

.font {
  width: 69px;
  height: 22px;
  color: #000;
  background: #e1e1e1;
  border: 1px solid #adadad;
}

.bold {
  width: 22px;
  height: 22px;
  color: #000;
  background: #cce4f7;
  border: 1px solid #005499;
  font-size: 18px;
  line-height: 20px;
}

.check {
  display: flex;
  align-items: center;
  gap: 3px;
}

.check input {
  appearance: none;
  width: 13px;
  height: 13px;
  border: 1px solid #333;
  background: #fff;
}

.check input:checked::after {
  content: "";
  display: block;
  width: 4px;
  height: 8px;
  margin: 0 0 0 3px;
  border: solid #333;
  border-width: 0 1px 1px 0;
  transform: rotate(40deg);
}

.fontbox .check {
  margin: 7px 0 0 4px;
}

/* editor */
.editor {
  flex: 1;
  min-width: 0;
  display: flex;
  flex-direction: column;
  border-right: 1px solid #a0a0a0;
}

.editor h1 {
  margin: 1px 0 0 2px;
  height: 20px;
  padding-left: 5px;
  background: #808080;
  color: #fff;
  font: bold 16px/20px "DejaVu Sans Condensed", sans-serif;
}

.head {
  height: 106px;
  padding: 3px 0 3px 3px;
  display: flex;
  flex-direction: column;
  justify-content: space-between;
}

.code {
  display: flex;
  align-items: center;
  gap: 4px;
}

.code input {
  width: 90px;
  height: 21px;
  padding-left: 2px;
  border: 1px solid #7a7a7a;
}

.head .check {
  padding-left: 1px;
}

.subtabs button {
  width: 71px;
  height: 25px;
  margin-left: 3px;
  background: #fff;
  border: 1px solid #dcdcdc;
  border-bottom: 0;
  white-space: nowrap;
}

.panes {
  flex: 1;
  min-height: 0;
  display: flex;
  margin: 0 4px 0 3px;
  background: #fff;
  border: 1px solid #d9d9d9;
  border-top: 0;
  padding: 0 0 2px 2px;
}

.pane {
  background: #f9f9f9;
}

.pane.left {
  flex: 293;
  border-right: 1px solid #d9d9d9;
}

.pane.mid {
  flex: 518;
  margin-left: 4px;
  padding: 0 6px 86px 8px;
  display: flex;
  flex-direction: column;
  background: #fff;
  border: solid #d9d9d9;
  border-width: 0 1px;
}

.pane.rest {
  flex: 292;
  margin-left: 3px;
  border-left: 1px solid #d9d9d9;
}

.group {
  flex: 1;
  display: flex;
  flex-direction: column;
  justify-content: flex-end;
  gap: 3px;
  padding: 0 0 5px;
  border: 1px solid #dcdcdc;
}

.field {
  display: grid;
  grid-template-columns: 411px auto auto 1fr;
  align-items: center;
  gap: 4px;
}

.field label {
  text-align: right;
}

.spin.wide {
  width: 58px;
}

.info svg {
  margin-left: -1px;
}

.editor-thumb {
  height: 494px;
}

.sheets {
  height: 24px;
  margin-left: 2px;
  padding-top: 2px;
  display: flex;
  align-items: flex-start;
}

.sheets a {
  height: 19px;
  padding: 0 5px;
  display: flex;
  align-items: center;
  gap: 6px;
  border: 1px solid #d9d9d9;
  border-left: 0;
  white-space: nowrap;
}

.sheets .cur {
  height: 21px;
  background: #fff;
  padding: 0 6px;
}

.status {
  height: 19px;
  display: flex;
  align-items: flex-end;
  justify-content: space-between;
  padding-right: 3px;
  background: #f5f5f5;
}

.status div {
  width: 97%;
  height: 18px;
  border: 1px solid #d4d4d4;
  background: linear-gradient(#fbfbfb, #efefef);
}

/* help window */
.help {
  position: absolute;
  left: 270px;
  top: 3px;
  right: 4px;
  bottom: 189px;
  display: flex;
  flex-direction: column;
  background: #f0f0f0;
  border: 1px solid #707070;
  box-shadow: 0 4px 16px 2px rgba(0, 0, 0, 0.4);
  font-family: "Liberation Sans", Arial, sans-serif;
}

.help-title {
  height: 30px;
  flex: none;
  display: flex;
  align-items: center;
  gap: 6px;
  padding-left: 7px;
  background: #fff;
  font-family: "Open Sans", "Noto Sans", sans-serif;
  font-size: 12px;
}

.winbtns {
  margin-left: auto;
  display: flex;
}

.winbtns button {
  width: 46px;
  display: flex;
  justify-content: center;
}

.help-tools {
  height: 40px;
  flex: none;
  display: flex;
  color: #000020;
}

.help-tools button {
  width: 52px;
  display: flex;
  flex-direction: column;
  align-items: center;
  padding-top: 4px;
  line-height: 14px;
}

.help-main {
  flex: 1;
  min-height: 0;
  display: flex;
}

.nav {
  width: 258px;
  flex: none;
  display: flex;
  flex-direction: column;
  padding: 15px 16px 1px 1px;
  border-top: 1px solid #909090;
  background: linear-gradient(90deg, transparent 250px, #909090 250px 251px, transparent 251px);
  font-family: Roboto, "Liberation Sans", sans-serif;
}

.tabs {
  display: flex;
  align-items: flex-end;
}

.tabs button {
  width: 40px;
  height: 18px;
  padding-left: 4px;
  border: 1px solid #d9d9d9;
  border-width: 1px 1px 0 0;
}

.tabs .cur {
  width: 64px;
  height: 21px;
  background: #fff;
}

.tabpage {
  flex: 1;
  min-height: 0;
  display: flex;
  padding: 4px 7px 6px 7px;
  background: #fff;
  border: 1px solid #d9d9d9;
  border-left: 0;
}

.tree {
  flex: 1;
  min-width: 0;
  display: flex;
  flex-direction: column;
  border: 1px solid #828790;
  padding: 1px;
}

.tree-rows {
  flex: 1;
  min-height: 0;
  display: flex;
  border-top: 1px solid #696969;
  border-left: 1px solid #696969;
}

.tree ul {
  flex: 1;
  min-width: 0;
  overflow: hidden;
}

.tree li {
  height: 16px;
  display: flex;
  align-items: center;
  white-space: nowrap;
  color: #000020;
}

.tree li > svg {
  width: 17px;
  height: 16px;
  margin-left: 2px;
}

.tree li > span {
  padding: 0 2px;
  margin-left: 2px;
  line-height: 16px;
}

.tree li .sel {
  background: #f0f0f0;
}

.tree li i {
  width: 19px;
  height: 16px;
  flex: none;
  display: flex;
  align-items: center;
  padding-left: 5px;
}

.tree .v {
  background: repeating-linear-gradient(#909090 0 1px, #fff 1px 2px) 9px 0 / 1px 16px no-repeat;
}

.tree .b {
  background: repeating-linear-gradient(#909090 0 1px, #fff 1px 2px) 9px 0 / 1px 16px no-repeat,
    repeating-linear-gradient(90deg, #909090 0 1px, #fff 1px 2px) 9px 8px / 10px 1px no-repeat;
}

.tree .last {
  background-size: 1px 8px, 10px 1px;
}

.tree i svg {
  width: 9px;
  height: 9px;
}

.tree-thumb {
  height: 323px;
  margin-top: 36px;
}

.tree .hbar .thumb {
  width: 90px;
  margin-left: 14px;
}

.doc {
  flex: 1;
  min-width: 0;
  display: flex;
  background: #fff;
  overflow: hidden;
}

.page {
  flex: 1;
  font-family: Lato, "Open Sans", sans-serif;
}

.doc .vbar {
  padding: 15px 0;
}

.doc-thumb {
  height: 144px;
  margin-top: 204px;
}

table {
  margin: 0 auto;
  border-collapse: collapse;
  table-layout: fixed;
  font-size: 11px;
}

.t1 {
  width: 670px;
}

.t2 {
  width: 688px;
}

td, th {
  padding: 0;
  border: 1px solid #c0c0c0;
  text-align: center;
  line-height: 16px;
}

tr {
  height: 23px;
}

th {
  font-size: 12px;
  text-align: left;
}

.mid {
  text-align: center;
}

.note {
  height: 41px;
  text-align: left;
  line-height: 18px;
}

.red {
  background: #ed1c24;
  font-weight: bold;
  font-size: 13px;
}

sub, sup {
  font-size: 9px;
  line-height: 0;
}

.note sub {
  color: #3060a0;
  font-size: 8px;
}

.note sup {
  font-size: 8px;
}

.method {
  margin-top: 29px;
  text-align: center;
  font-size: 14px;
  line-height: 20px;
}

.caption {
  text-align: center;
  font-size: 14px;
  line-height: 20px;
}

.r57 { height: 57px; }
.r60 { height: 60px; }
.r42 { height: 42px; }
.r27 { height: 27px; }
.r22 { height: 22px; }

.w4 { width: 4px; }
.w21 { width: 21px; }
.w23 { width: 23px; }
.w24 { width: 24px; }
.w25 { width: 25px; }
.w26 { width: 26px; }
.w27 { width: 27px; }
.w28 { width: 28px; }
.w29 { width: 29px; }
.w30 { width: 30px; }
.w33 { width: 33px; }
.w34 { width: 34px; }
.w36 { width: 36px; }
.w38 { width: 38px; }
.w39 { width: 39px; }
.w40 { width: 40px; }
.w41 { width: 41px; }
.w44 { width: 44px; }
.w115 { width: 115px; }
.w127 { width: 127px; }

/* numbered arrows over the windows */
.step {
  position: absolute;
  width: 50px;
  height: 52px;
}

.step b {
  position: absolute;
  left: 19px;
  top: 13px;
  color: #fff;
  font: bold 24px/26px "Liberation Sans", Arial, sans-serif;
}

.s1 { left: 153px; top: 290px; }
.s2 { left: 255px; top: 196px; }
.s3 { left: 970px; top: 647px; }
```
